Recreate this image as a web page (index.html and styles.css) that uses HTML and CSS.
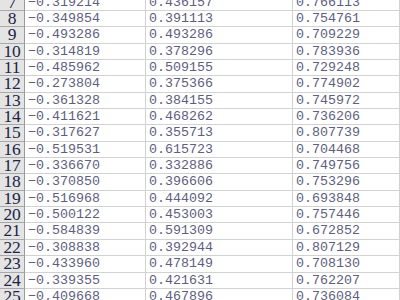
FILE: index.html
```html
<!DOCTYPE html>
<html>
<head>
<meta charset="utf-8">
<link rel="stylesheet" href="styles.css">
</head>
<body>
<div class="sheet">
<div class="rh">7</div><div class="c">−0.319214</div><div class="c">0.436157</div><div class="c">0.766113</div>
<div class="rh">8</div><div class="c">−0.349854</div><div class="c">0.391113</div><div class="c">0.754761</div>
<div class="rh">9</div><div class="c">−0.493286</div><div class="c">0.493286</div><div class="c">0.709229</div>
<div class="rh">10</div><div class="c">−0.314819</div><div class="c">0.378296</div><div class="c">0.783936</div>
<div class="rh">11</div><div class="c">−0.485962</div><div class="c">0.509155</div><div class="c">0.729248</div>
<div class="rh">12</div><div class="c">−0.273804</div><div class="c">0.375366</div><div class="c">0.774902</div>
<div class="rh">13</div><div class="c">−0.361328</div><div class="c">0.384155</div><div class="c">0.745972</div>
<div class="rh">14</div><div class="c">−0.411621</div><div class="c">0.468262</div><div class="c">0.736206</div>
<div class="rh">15</div><div class="c">−0.317627</div><div class="c">0.355713</div><div class="c">0.807739</div>
<div class="rh">16</div><div class="c">−0.519531</div><div class="c">0.615723</div><div class="c">0.704468</div>
<div class="rh">17</div><div class="c">−0.336670</div><div class="c">0.332886</div><div class="c">0.749756</div>
<div class="rh">18</div><div class="c">−0.370850</div><div class="c">0.396606</div><div class="c">0.753296</div>
<div class="rh">19</div><div class="c">−0.516968</div><div class="c">0.444092</div><div class="c">0.693848</div>
<div class="rh">20</div><div class="c">−0.500122</div><div class="c">0.453003</div><div class="c">0.757446</div>
<div class="rh">21</div><div class="c">−0.584839</div><div class="c">0.591309</div><div class="c">0.672852</div>
<div class="rh">22</div><div class="c">−0.308838</div><div class="c">0.392944</div><div class="c">0.807129</div>
<div class="rh">23</div><div class="c">−0.433960</div><div class="c">0.478149</div><div class="c">0.708130</div>
<div class="rh">24</div><div class="c">−0.339355</div><div class="c">0.421631</div><div class="c">0.762207</div>
<div class="rh">25</div><div class="c">−0.409668</div><div class="c">0.467896</div><div class="c">0.736084</div>
</div>
</body>
</html>
```
FILE: styles.css
```css
html, body {
  margin: 0;
  padding: 0;
  background: #ffffff;
  overflow: hidden;
  width: 400px;
  height: 300px;
}
.sheet {
  display: grid;
  grid-template-columns: 25px 121px 147px 1fr;
  grid-auto-rows: 16.35px;
  margin-top: -5.35px;
}
.sheet > div {
  box-sizing: border-box;
  border-bottom: 1px solid #d2d2d2;
  border-right: 1px solid #d2d2d2;
  overflow: hidden;
  white-space: nowrap;
}
.rh {
  background: #e4e4e4;
  border-bottom-color: #a9a9a9 !important;
  border-right-color: #9a9a9a !important;
  font-family: "Liberation Serif", serif;
  font-size: 17.5px;
  line-height: 15.5px;
  color: #1c2544;
  text-align: center;
  letter-spacing: -0.3px;
}
.c {
  font-family: "Liberation Mono", monospace;
  font-size: 13.33px;
  line-height: 16px;
  color: #5e5e7e;
  padding-left: 3px;
}
```
